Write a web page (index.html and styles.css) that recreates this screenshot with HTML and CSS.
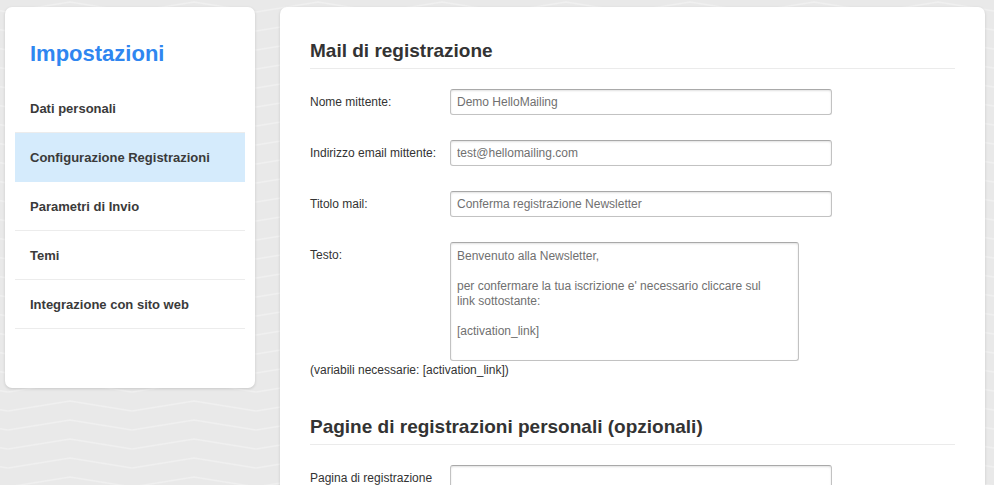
FILE: index.html
```html
<!DOCTYPE html>
<html lang="it">
<head>
    <meta charset="UTF-8">
    <meta name="viewport" content="width=device-width, initial-scale=1.0">
    <title>Impostazioni</title>
    <link rel="stylesheet" href="styles.css">
</head>
<body>
    <div class="page">
        <div class="sidebar">
            <h1>Impostazioni</h1>
            <ul class="menu">
                <li><a href="#">Dati personali</a></li>
                <li class="active"><a href="#">Configurazione Registrazioni</a></li>
                <li><a href="#">Parametri di Invio</a></li>
                <li><a href="#">Temi</a></li>
                <li><a href="#">Integrazione con sito web</a></li>
            </ul>
        </div>

        <div class="content">
            <h2>Mail di registrazione</h2>
            <form>
                <div class="row">
                    <label for="sender">Nome mittente:</label>
                    <input type="text" id="sender" value="Demo HelloMailing">
                </div>
                <div class="row">
                    <label for="email">Indirizzo email mittente:</label>
                    <input type="text" id="email" value="test@hellomailing.com">
                </div>
                <div class="row">
                    <label for="subject">Titolo mail:</label>
                    <input type="text" id="subject" value="Conferma registrazione Newsletter">
                </div>
                <div class="row row-top">
                    <label for="body">Testo:</label>
                    <textarea id="body">Benvenuto alla Newsletter,

per confermare la tua iscrizione e' necessario cliccare sul link sottostante:

[activation_link]</textarea>
                </div>
                <p class="hint">(variabili necessarie: [activation_link])</p>

                <h2 class="second">Pagine di registrazioni personali (opzionali)</h2>
                <div class="row">
                    <label for="page">Pagina di registrazione</label>
                    <input type="text" id="page" value="">
                </div>
            </form>
        </div>
    </div>
</body>
</html>
```

FILE: styles.css
```css
html, body {
    height: 100%;
}

body {
    margin: 0;
    font-family: "Liberation Sans", Arial, sans-serif;
    background-color: #e9e9e9;
    background-image: url("data:image/svg+xml,%3Csvg xmlns='http://www.w3.org/2000/svg' width='124' height='19'%3E%3Cg fill='none' stroke='%23f0f0f0' stroke-width='1.5'%3E%3Cpolyline points='0,12 62,2 124,12'/%3E%3Cpolyline points='0,31 62,21 124,31'/%3E%3Cpolyline points='0,-7 62,-17 124,-7'/%3E%3C/g%3E%3C/svg%3E");
    background-position: 8px 0;
    overflow: hidden;
}

.page {
    display: flex;
    align-items: flex-start;
    gap: 25px;
    padding: 7px 9px 0 5px;
}

.sidebar {
    flex: 0 0 250px;
    height: 381px;
    box-sizing: border-box;
    padding: 0 10px;
    background-color: #ffffff;
    border-radius: 7px;
    box-shadow: 0 1px 3px rgba(0, 0, 0, 0.15);
}

.sidebar h1 {
    margin: 0;
    padding: 34px 15px 0;
    height: 43px;
    font-size: 22px;
    font-weight: bold;
    color: #2f86f0;
    line-height: 26px;
}

.menu {
    list-style: none;
    margin: 0;
    padding: 0;
}

.menu li {
    height: 48px;
    border-bottom: 1px solid #ececec;
}

.menu li a {
    display: block;
    padding: 0 15px;
    line-height: 49px;
    font-size: 13px;
    font-weight: bold;
    color: #3a3a3a;
    text-decoration: none;
}

.menu li.active {
    background-color: #d5ebfc;
    border-bottom-color: #d5ebfc;
}

.content {
    flex: 1;
    height: 520px;
    padding: 32px 30px 0;
    background-color: #ffffff;
    border-radius: 7px;
    box-shadow: 0 1px 3px rgba(0, 0, 0, 0.15);
}

h2 {
    margin: 0 0 20px;
    padding-bottom: 5px;
    font-size: 19px;
    font-weight: bold;
    color: #333333;
    line-height: 24px;
    border-bottom: 1px solid #ebebeb;
}

h2.second {
    margin-top: 37px;
}

.row {
    display: flex;
    align-items: center;
    margin-bottom: 25px;
}

.row-top {
    align-items: flex-start;
    margin-bottom: 0;
}

.row label {
    flex: 0 0 140px;
    font-size: 12px;
    color: #333333;
}

.row-top label {
    padding-top: 6px;
}

input[type=text], textarea {
    box-sizing: border-box;
    font-family: "Liberation Sans", Arial, sans-serif;
    font-size: 12px;
    color: #707070;
    background-color: #ffffff;
    border: 1px solid #c2c2c2;
    border-top-color: #a9a9a9;
    border-radius: 3px;
    box-shadow: inset 0 1px 2px rgba(0, 0, 0, 0.12);
}

input[type=text] {
    width: 382px;
    height: 26px;
    padding: 0 6px;
}

textarea {
    width: 349px;
    height: 119px;
    padding: 6px 20px 6px 6px;
    line-height: 15px;
    resize: none;
}

.hint {
    margin: 0;
    padding-top: 1px;
    font-size: 12px;
    color: #333333;
    line-height: 16px;
}
```
